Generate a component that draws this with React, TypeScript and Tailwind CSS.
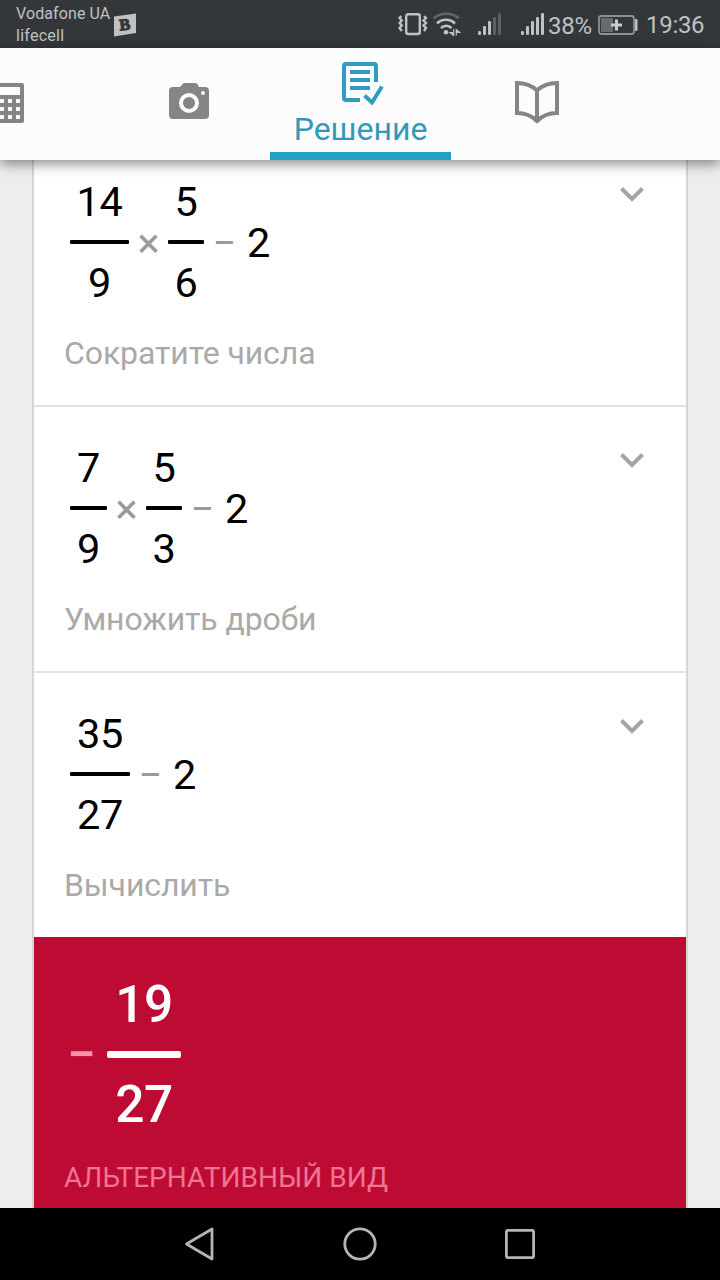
import React from 'react';

type Part = { op: string } | { value: string } | { top: string; bottom: string; size?: 'md' | 'lg' | 'xl' };

interface StepData {
  parts: Part[];
  caption: string;
}

const fractionWidths = {
  sm: 'flex w-[36px] flex-col items-center',
  md: 'flex w-[37px] flex-col items-center',
  lg: 'flex w-[59px] flex-col items-center',
  xl: 'flex w-[60px] flex-col items-center',
};

const steps: StepData[] = [
  {
    parts: [{ top: '14', bottom: '9', size: 'lg' }, { op: '×' }, { top: '5', bottom: '6' }, { op: '−' }, { value: '2' }],
    caption: 'Сократите числа',
  },
  {
    parts: [{ top: '7', bottom: '9', size: 'md' }, { op: '×' }, { top: '5', bottom: '3' }, { op: '−' }, { value: '2' }],
    caption: 'Умножить дроби',
  },
  {
    parts: [{ top: '35', bottom: '27', size: 'xl' }, { op: '−' }, { value: '2' }],
    caption: 'Вычислить',
  },
];

function Bars({ lit }: { lit: number }) {
  return (
    <svg width="24" height="24" viewBox="0 0 24 24" fill="#bfc1c2">
      {[4, 9, 14, 18, 22].map((h, i) => (
        <rect key={h} x={i * 5} y={23 - h} width="3" height={h} rx="1.2" opacity={i < lit ? 1 : 0.3} />
      ))}
    </svg>
  );
}

function StatusBar() {
  return (
    <div className="flex h-12 shrink-0 items-start bg-[#33373a] text-[#bfc1c2]">
      <div className="ml-4 mt-[3px] w-[98px] whitespace-nowrap text-[16px] leading-[22px] tracking-[0.1px]">
        <div>Vodafone UA</div>
        <div className="tracking-[0.25px]">lifecell</div>
      </div>
      <svg className="mt-[13px]" width="22" height="24" viewBox="0 0 22 24">
        <path d="M0 3.500 22 .5V20L0 23.500Z" fill="#bfc1c2" />
        <text x="5.500" y="17" fontFamily="Liberation Serif, serif" fontWeight="700" fontSize="16" fill="#33373a" stroke="#33373a" strokeWidth="1.2" transform="rotate(-6 11 12)">B</text>
      </svg>
      <svg className="ml-[262px] mt-3" width="30" height="24" viewBox="0 0 30 24" fill="none" stroke="#bfc1c2">
        <rect x="8.200" y="2.200" width="13.600" height="19.800" rx="2" strokeWidth="2.400" />
        <path d="M3.300 4 1.600 6l2.200 2.500L1.600 11l2.200 2.500L1.600 16l2.200 3M26 4l2 2-2.500 2.500L28 11l-2.500 2.500L28 16l-2 3" strokeWidth="2.400" />
      </svg>
      <svg className="ml-[5px] mt-3" width="28" height="24" viewBox="0 0 28 24" fill="none" stroke="#bfc1c2" strokeWidth="2.600">
        <path d="M.8 6.200C8 .2 18.500.2 25.800 6.200" opacity=".35" />
        <path d="M4 11.500c5-5 13-5 18 0" />
        <path d="M8 16c3-3 7.500-3 10.500 0" />
        <circle cx="13" cy="20.300" r="2.300" fill="#bfc1c2" stroke="none" />
        <path d="M20.700 17v6.500L17 20.500h4M23.300 23.500V17.500l3.500 3h-3.500" strokeWidth="1.200" fill="#bfc1c2" />
      </svg>
      <div className="ml-[17px] mt-3"><Bars lit={3} /></div>
      <div className="ml-[19px] mt-3"><Bars lit={5} /></div>
      <div className="ml-[3px] mt-[12px] w-[50px] text-[24px] leading-[28px] tracking-[-0.3px]">38%</div>
      <svg className="mt-[14px]" width="42" height="22" viewBox="0 0 42 22">
        <rect x="1" y="2" width="35" height="18" rx="2.500" fill="none" stroke="#8d9092" strokeWidth="1.800" />
        <rect x="3" y="4" width="12" height="14" fill="#686b6d" />
        <path d="M18.500 5.500v11M13 11h11" stroke="#c8cacb" strokeWidth="3" />
        <rect x="37" y="5" width="2.500" height="12" rx="1" fill="#bfc1c2" />
      </svg>
      <div className="ml-[6px] mt-[11px] text-[24px] leading-[28px] tracking-[-0.3px]">19:36</div>
    </div>
  );
}

function TabBar() {
  return (
    <div className="relative z-10 flex h-28 shrink-0 bg-[#fcfcfc] shadow-[0_4px_12px_rgba(0,0,0,0.45)]">
      <div className="w-[108px] pt-[35px]">
        <svg width="24" height="40" viewBox="0 0 24 40">
          <path d="M0 0h22q2 0 2 2v36q0 2-2 2H0z" fill="#858585" />
          <path d="M0 4h20v8H0zM0 16h4v4H0zM8 16h4v4H8zM16 16h4v4h-4zM0 24h4v4H0zM8 24h4v4H8zM16 24h4v4h-4zM0 32h4v4H0zM8 32h4v4H8zM16 32h4v4h-4z" fill="#fcfcfc" />
        </svg>
      </div>
      <div className="flex w-[162px] justify-center pt-[35px]">
        <svg width="40" height="36" viewBox="0 0 40 36">
          <path d="M4 4h7l2.500-2.800Q14.500 0 16 0h10q1.500 0 2.500 1.200L30 4h6q4 0 4 4v24q0 4-4 4H4q-4 0-4-4V8q0-4 4-4z" fill="#858585" />
          <circle cx="20" cy="20" r="8" fill="none" stroke="#fcfcfc" strokeWidth="4" />
          <circle cx="34" cy="10" r="2" fill="#fcfcfc" />
        </svg>
      </div>
      <div className="flex w-[181px] flex-col items-center border-b-8 border-[#20a1c6] pt-[14px] text-[#3099b9]">
        <svg className="ml-[5px]" width="42" height="44" viewBox="0 0 42 44" fill="none" stroke="#2f9dbf" strokeWidth="4">
          <path d="M18 38H4q-2 0-2-2V4q0-2 2-2h28q2 0 2 2v16" strokeLinejoin="round" />
          <path d="M8 10h20M8 18h20M8 26h20M22.500 33.500l7.500 7L40 24.500" />
        </svg>
        <div className="mt-[3px] text-[32px] leading-[40px]">Решение</div>
      </div>
      <div className="flex w-[172px] justify-center pt-[33px]">
        <svg width="44" height="44" viewBox="0 0 44 44" fill="none" stroke="#858585" strokeWidth="4">
          <path d="M2 2Q14 2 22 9.500Q30 2 42 2V32Q30 32 22 40Q14 32 2 32Z" />
          <path d="M22 9v30" />
        </svg>
      </div>
    </div>
  );
}

function Expression({ parts }: { parts: Part[] }) {
  return (
    <div className="flex h-[121px] items-center pl-9 text-[41.5px] leading-[40px] text-black">
      {parts.map((p, i) => {
        if ('op' in p)
          return (
            <span
              key={i}
              className={p.op === '×' ? 'w-[39px] text-center text-[#999]' : 'w-[43px] pr-0.5 text-center text-[#999]'}
            >
              {p.op}
            </span>
          );
        if ('value' in p) return <span key={i}>{p.value}</span>;
        return (
          <div key={i} className={fractionWidths[p.size ?? 'sm']}>
            <span className="tracking-[-0.2px]">{p.top}</span>
            <span className="mb-[19px] mt-[18px] h-1 w-full rounded-[1px] bg-black" />
            <span className="tracking-[-0.2px]">{p.bottom}</span>
          </div>
        );
      })}
    </div>
  );
}

function Step({ parts, caption }: StepData) {
  return (
    <section className="flex h-[266px] shrink-0 border-b-2 border-[#e2e2e2] bg-white">
      <div className="flex-1 pt-[41px]">
        <Expression parts={parts} />
        <p className="mt-[30px] pl-[30px] text-[32px] leading-[40px] tracking-[-0.1px] text-[#a9a9a9]">{caption}</p>
      </div>
      <svg className="mr-[42px] mt-[46px]" width="24" height="16" viewBox="0 0 24 16" fill="none" stroke="#a3a4a6" strokeWidth="4">
        <path d="M1.500 1.500 12 12 22.500 1.500" />
      </svg>
    </section>
  );
}

function Result() {
  return (
    <section className="-mt-0.5 h-[271px] shrink-0 bg-[#be0b33] text-white">
      <div className="flex h-[152px] items-center pl-[33px] pt-[84px] text-[51.5px] font-medium leading-[50px]">
        <span className="w-[40px] text-[#f990ad]">−</span>
        <div className="flex w-[74px] flex-col items-center">
          <span className="tracking-[-0.5px]">19</span>
          <span className="mb-[22px] mt-[21px] h-[7px] w-full rounded-[2px] bg-white" />
          <span className="tracking-[-0.5px]">27</span>
        </div>
      </div>
      <p className="mt-[69px] pl-[30px] text-[28px] leading-[40px] tracking-[0.05px] text-[#ef7592]">АЛЬТЕРНАТИВНЫЙ ВИД</p>
    </section>
  );
}

function NavBar() {
  return (
    <div className="relative z-10 flex h-[72px] shrink-0 items-center justify-center gap-[128px] bg-black pr-0.5">
      <svg width="32" height="36" viewBox="0 0 32 36" fill="none" stroke="#b4b4b4" strokeWidth="2.800" strokeLinejoin="round">
        <path d="M29 3v30L3.500 18z" />
      </svg>
      <svg width="34" height="34" viewBox="0 0 34 34" fill="none" stroke="#b4b4b4" strokeWidth="2.800">
        <circle cx="17" cy="17" r="15.200" />
      </svg>
      <svg width="30" height="30" viewBox="0 0 30 30" fill="none" stroke="#b4b4b4" strokeWidth="2.800">
        <rect x="1.400" y="1.400" width="27.200" height="27.200" rx="1.500" />
      </svg>
    </div>
  );
}

export default function App() {
  return (
    <div className="flex h-[1280px] w-[720px] flex-col overflow-hidden bg-[#ededed] font-['Roboto',sans-serif]">
      <StatusBar />
      <TabBar />
      <main className="flex h-[1048px] shrink-0 flex-col overflow-hidden px-8">
        <div className="-mt-[19px] flex flex-col border-x-2 border-[#d6d6d6]">
          {steps.map((s) => (
            <Step key={s.caption} {...s} />
          ))}
          <Result />
        </div>
      </main>
      <NavBar />
    </div>
  );
}
